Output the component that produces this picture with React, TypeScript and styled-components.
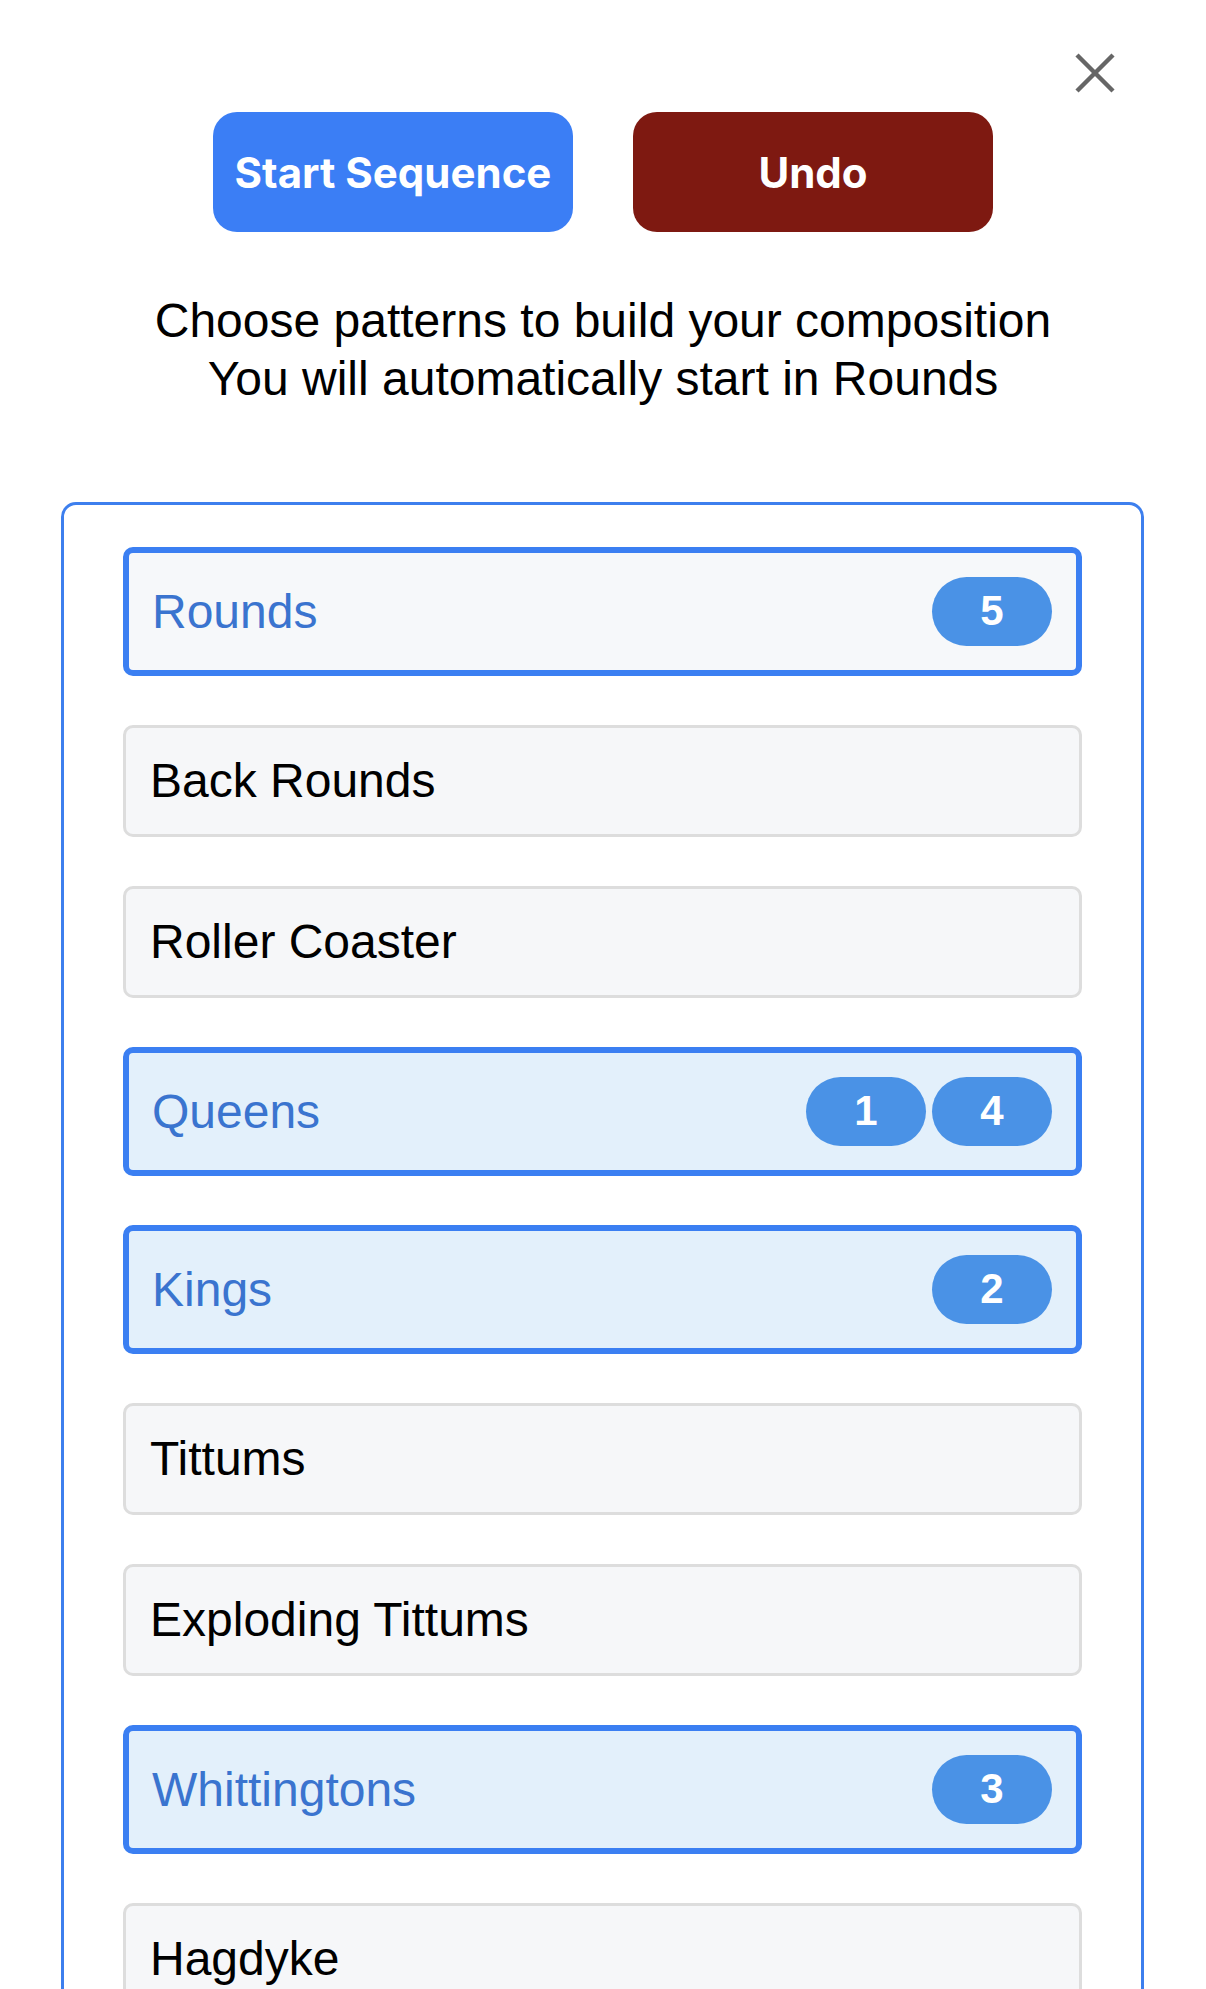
import React from "react";
import styled, { createGlobalStyle, css } from "styled-components";

const GlobalStyle = createGlobalStyle`
  html, body {
    margin: 0;
    padding: 0;
    background: #ffffff;
  }
  body {
    font-family: "Liberation Sans", Arial, Helvetica, sans-serif;
    color: #000;
  }
  * { box-sizing: border-box; }
`;

const Page = styled.div`
  position: relative;
  padding-top: 112px;
`;

const CloseButton = styled.button`
  position: absolute;
  top: 53px;
  right: 91px;
  width: 40px;
  height: 40px;
  padding: 0;
  border: none;
  background: transparent;
  display: flex;
  align-items: center;
  justify-content: center;
  cursor: pointer;
`;

const ButtonRow = styled.div`
  display: flex;
  justify-content: center;
  gap: 60px;
`;

const ActionButton = styled.button<{ $variant: "primary" | "danger" }>`
  width: 360px;
  height: 120px;
  border: none;
  border-radius: 24px;
  color: #ffffff;
  font-family: Inter, "Liberation Sans", sans-serif;
  font-weight: 700;
  font-size: 42px;
  letter-spacing: 0;
  display: flex;
  align-items: center;
  justify-content: center;
  padding: 0;
  background: ${(p) => (p.$variant === "primary" ? "#3b7ef5" : "#7e1911")};
`;

const Intro = styled.p`
  margin: 60px 0 0;
  text-align: center;
  font-size: 48px;
  line-height: 1.2;
  color: #000;
`;

const Panel = styled.section`
  margin: 95px 62px 0 61px;
  border: 3px solid #3d7fee;
  border-radius: 15px;
  padding: 42px 59px 44px;
`;

const PatternList = styled.ul`
  list-style: none;
  margin: 0;
  padding: 0;
  display: flex;
  flex-direction: column;
  gap: 49px;
`;

const PatternItem = styled.li<{ $selected: boolean; $tinted: boolean }>`
  display: flex;
  align-items: center;
  justify-content: space-between;
  padding: 24px;
  border-radius: 10px;
  font-size: 48px;
  line-height: 1.2;
  background: #f6f7f9;
  border: 3px solid #dddddd;
  color: #000;
  min-height: 112px;
  ${(p) =>
    p.$selected &&
    css`
      border: 6px solid #3b7ff2;
      color: #3a74cf;
      padding: 24px 24px 24px 23px;
      background: ${p.$tinted ? "#e3f0fb" : "#f6f8fa"};
    `}
`;

const BadgeGroup = styled.div`
  display: flex;
  gap: 6px;
`;

const Badge = styled.span`
  width: 120px;
  height: 69px;
  border-radius: 35px;
  background: #4a92e6;
  color: #ffffff;
  font-weight: 700;
  font-size: 42px;
  display: flex;
  align-items: center;
  justify-content: center;
`;

type Pattern = { name: string; order: number[]; tinted?: boolean };

const patterns: Pattern[] = [
  { name: "Rounds", order: [5] },
  { name: "Back Rounds", order: [] },
  { name: "Roller Coaster", order: [] },
  { name: "Queens", order: [1, 4], tinted: true },
  { name: "Kings", order: [2], tinted: true },
  { name: "Tittums", order: [] },
  { name: "Exploding Tittums", order: [] },
  { name: "Whittingtons", order: [3], tinted: true },
  { name: "Hagdyke", order: [] },
];

export default function App() {
  return (
    <Page>
      <GlobalStyle />
      <CloseButton aria-label="Close">
        <svg width="40" height="40" viewBox="0 0 40 40">
          <line x1="2" y1="2" x2="38" y2="38" stroke="#666666" strokeWidth="4.5" />
          <line x1="38" y1="2" x2="2" y2="38" stroke="#666666" strokeWidth="4.5" />
        </svg>
      </CloseButton>
      <ButtonRow>
        <ActionButton $variant="primary">Start Sequence</ActionButton>
        <ActionButton $variant="danger">Undo</ActionButton>
      </ButtonRow>
      <Intro>
        Choose patterns to build your composition
        <br />
        You will automatically start in Rounds
      </Intro>
      <Panel>
        <PatternList>
          {patterns.map((p) => (
            <PatternItem key={p.name} $selected={p.order.length > 0} $tinted={!!p.tinted}>
              <span>{p.name}</span>
              {p.order.length > 0 && (
                <BadgeGroup>
                  {p.order.map((n) => (
                    <Badge key={n}>{n}</Badge>
                  ))}
                </BadgeGroup>
              )}
            </PatternItem>
          ))}
        </PatternList>
      </Panel>
    </Page>
  );
}
